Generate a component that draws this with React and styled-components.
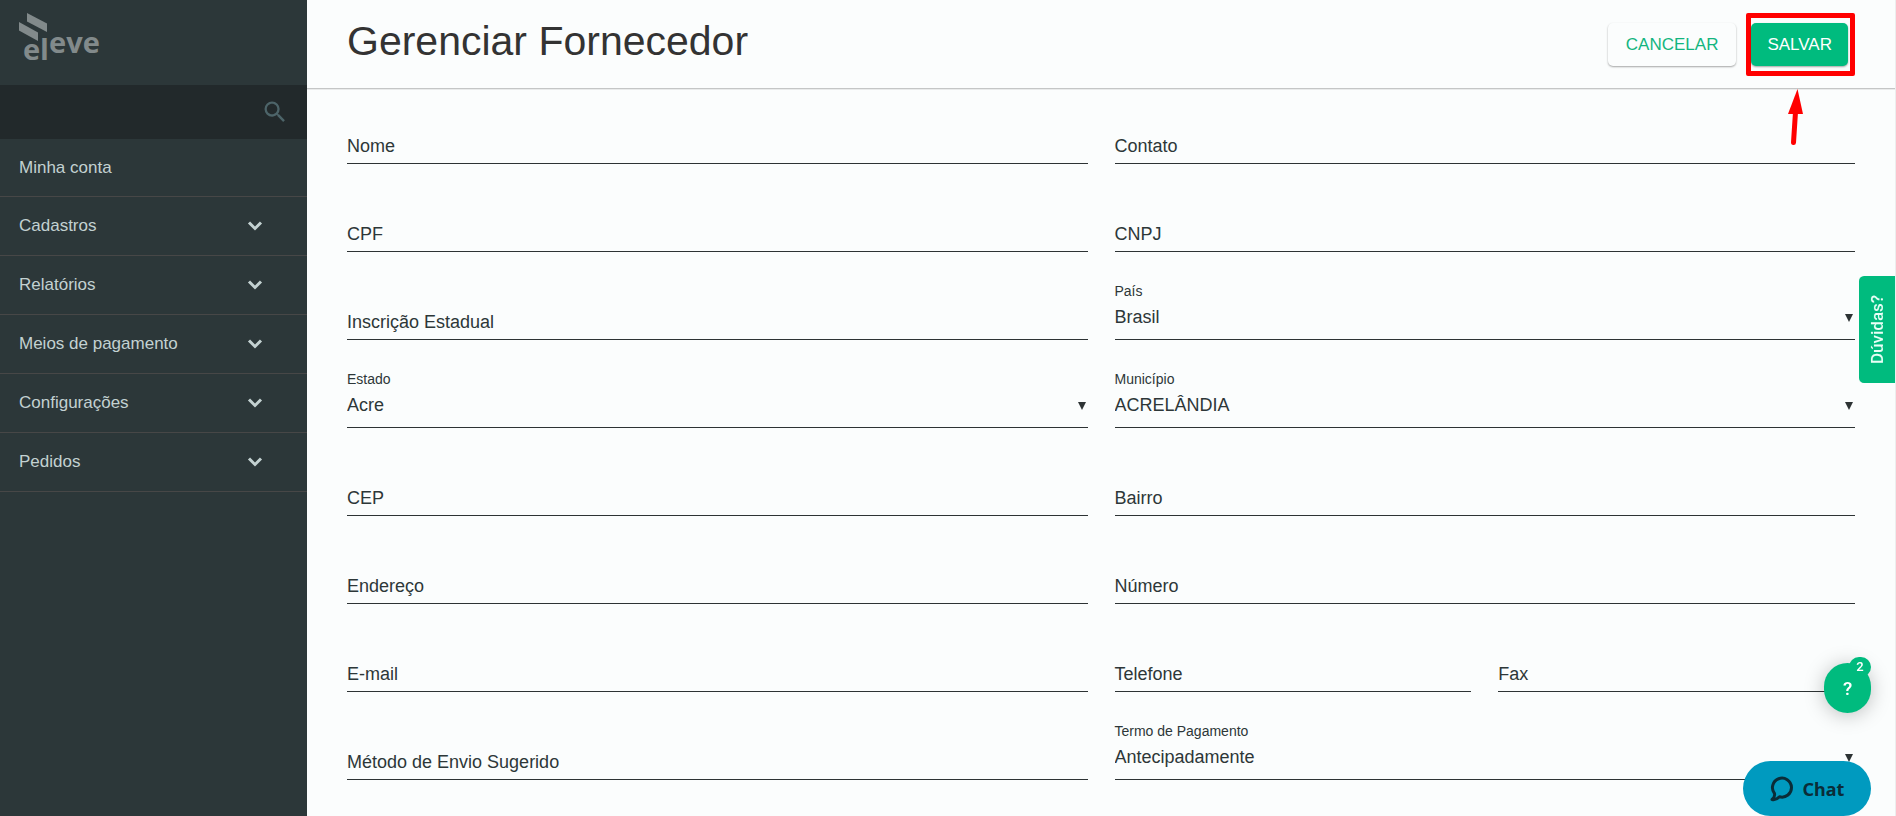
import { useId } from 'react';
import styled, { createGlobalStyle, css } from 'styled-components';
import { MdSearch } from 'react-icons/md';

const GlobalStyle = createGlobalStyle`
  * {
    box-sizing: border-box;
  }
  body {
    margin: 0;
    background: #fbfdfd;
    color: #2d3738;
    font-family: 'Liberation Sans', Arial, sans-serif;
    font-size: 18px;
  }
  button, input, select {
    font: inherit;
    color: inherit;
  }
`;

const Page = styled.div`
  display: flex;
  min-height: 100vh;
`;
const Sidebar = styled.aside`
  flex: 0 0 307px;
  background: #2c3739;
  color: #c3d1d1;
`;
const LogoLink = styled.a`
  display: flex;
  height: 85px;
  padding: 13px 19px;
  svg {
    display: block;
  }
  text {
    font-family: 'Open Sans', sans-serif;
    font-size: 29px;
    font-weight: 700;
  }
`;
const SearchBar = styled.form`
  display: flex;
  align-items: center;
  height: 54px;
  padding: 0 18px;
  background: #22292b;
`;
const SearchInput = styled.input`
  flex: 1;
  min-width: 0;
  border: none;
  outline: none;
  background: transparent;
`;
const SearchButton = styled.button`
  display: flex;
  padding: 0;
  border: none;
  background: none;
  color: #4d6469;
  font-size: 28px;
  cursor: pointer;
`;
const Menu = styled.ul`
  margin: 0;
  padding: 0;
  list-style: none;
`;
const menuEntry = css`
  display: flex;
  align-items: center;
  justify-content: space-between;
  width: 100%;
  padding: 19px 44px 19px 19px;
  border: none;
  border-bottom: 1px solid #474747;
  background: none;
  color: inherit;
  font-size: 17px;
  line-height: 20px;
  text-decoration: none;
  text-align: left;
  cursor: pointer;
`;
const MenuLink = styled.a`
  ${menuEntry}
  padding-bottom: 18px;
`;
const MenuButton = styled.button`
  ${menuEntry}
`;

const Main = styled.main`
  flex: 1;
  min-width: 0;
  border-right: 1px solid #eceeee;
`;
const Header = styled.header`
  display: flex;
  align-items: flex-start;
  justify-content: space-between;
  height: 88px;
  padding: 13px 40px 0;
  box-shadow: 0 1px 0 #c4c6c6, 0 2px 0 #e9ebeb;
`;
const Title = styled.h1`
  margin: 0;
  color: #333;
  font-size: 41px;
  font-weight: 400;
  line-height: 56px;
`;
const Actions = styled.div`
  display: flex;
  align-items: center;
  gap: 10px;
`;
const Button = styled.button`
  height: 43px;
  padding: 0 ${({ $primary }) => ($primary ? '16px' : '18px')};
  border: none;
  border-radius: 5px;
  background: ${({ $primary }) => ($primary ? '#00bb7e' : '#fbfdfd')};
  box-shadow: 0 1px 2px rgba(0, 0, 0, 0.35);
  color: ${({ $primary }) => ($primary ? '#fff' : '#13b57f')};
  font-size: 17px;
  text-transform: uppercase;
  cursor: pointer;
`;
const Highlight = styled.div`
  position: relative;
  padding: 5px 2px 5px 0;
  border: 5px solid #ff0000;
  border-radius: 2px;
`;
const Arrow = styled.svg`
  position: absolute;
  top: 70px;
  left: 36px;
`;

const Form = styled.form`
  display: grid;
  grid-template-columns: 1fr 1fr;
  gap: 26px 27px;
  padding: 14px 40px 26px;
`;
const Pair = styled.div`
  display: grid;
  grid-template-columns: 1fr 1fr;
  gap: 27px;
`;
/* label and input share one cell, so the label rests on the line */
const InputField = styled.div`
  display: grid;
  min-width: 0;
  height: 62px;
  border-bottom: 1px solid #2d3334;
  label,
  input {
    grid-area: 1 / 1;
  }
  label {
    align-self: end;
    padding-bottom: 6px;
    line-height: 22px;
  }
`;
const Input = styled.input`
  width: 100%;
  min-width: 0;
  padding: 28px 0 0;
  border: none;
  outline: none;
  background: transparent;
`;
const SelectField = styled.div`
  position: relative;
  display: flex;
  flex-direction: column;
  min-width: 0;
  height: 62px;
  border-bottom: 1px solid #2d3334;
  label {
    padding-top: 5px;
    font-size: 14px;
    line-height: 16px;
  }
  svg {
    position: absolute;
    right: 2px;
    bottom: 17px;
    pointer-events: none;
  }
`;
const Select = styled.select`
  flex: 1;
  padding: 0 20px 5px 0;
  border: none;
  outline: none;
  appearance: none;
  background: transparent;
`;

const Doubts = styled.button`
  position: fixed;
  top: 276px;
  right: 1px;
  width: 36px;
  height: 107px;
  padding: 0;
  border: none;
  border-radius: 0 5px 5px 0;
  background: #00bb7e;
  color: #e9fff7;
  font-family: Roboto, sans-serif;
  font-size: 17px;
  font-weight: 500;
  writing-mode: vertical-rl;
  transform: rotate(180deg);
  cursor: pointer;
`;
const Help = styled.button`
  position: fixed;
  right: 25px;
  bottom: 103px;
  width: 47px;
  height: 50px;
  padding: 0;
  border: none;
  border-radius: 25px;
  background: #00bb7e;
  box-shadow: 0 2px 20px rgba(0, 0, 0, 0.25);
  color: #fff;
  font-family: Roboto, sans-serif;
  font-size: 19px;
  font-weight: 500;
  cursor: pointer;
`;
const Badge = styled.span`
  position: absolute;
  top: -6px;
  right: 0;
  width: 22px;
  border-radius: 11px;
  background: #00bb7e;
  font-size: 13px;
  line-height: 20px;
`;
const Chat = styled.button`
  position: fixed;
  right: 25px;
  bottom: 0;
  display: flex;
  align-items: center;
  justify-content: center;
  gap: 9px;
  width: 128px;
  height: 55px;
  padding: 0;
  border: none;
  border-radius: 28px;
  background: #009abf;
  color: #0a2d38;
  font-family: 'Noto Sans', sans-serif;
  font-size: 18px;
  font-weight: 700;
  cursor: pointer;
`;

const Logo = () => (
  <svg width="82" height="56" viewBox="0 0 82 56" fill="#828a8b">
    <path d="M8 0 28 10.500V19L8 8.500Z" />
    <path d="M0 9 19 19.500V28L0 17.500Z" />
    <text x="4" y="47">e</text>
    <text x="21" y="47">l</text>
    <text x="30" y="40">eve</text>
  </svg>
);

const Chevron = () => (
  <svg width="16" height="10" viewBox="0 0 16 10" fill="none">
    <path d="M2 1.500 8 7.500 14 1.500" stroke="#c3d1d1" strokeWidth="3" />
  </svg>
);

const TextField = ({ label }) => {
  const id = useId();
  return (
    <InputField>
      <label htmlFor={id}>{label}</label>
      <Input id={id} type="text" />
    </InputField>
  );
};

const DropDown = ({ label, value }) => {
  const id = useId();
  return (
    <SelectField>
      <label htmlFor={id}>{label}</label>
      <Select id={id} defaultValue={value}>
        <option>{value}</option>
      </Select>
      <svg width="8" height="8" viewBox="0 0 8 8">
        <path d="M0 0H8L4 8Z" fill="#2d3334" />
      </svg>
    </SelectField>
  );
};

const sections = [
  'Cadastros',
  'Relatórios',
  'Meios de pagamento',
  'Configurações',
  'Pedidos',
];

const App = () => {
  return (
    <>
      <GlobalStyle />
      <Page>
        <Sidebar>
          <LogoLink href="#">
            <Logo />
          </LogoLink>
          <SearchBar onSubmit={e => e.preventDefault()}>
            <SearchInput type="search" aria-label="Buscar" />
            <SearchButton type="submit" aria-label="Buscar">
              <MdSearch />
            </SearchButton>
          </SearchBar>
          <Menu>
            <li>
              <MenuLink href="#">Minha conta</MenuLink>
            </li>
            {sections.map(name => (
              <li key={name}>
                <MenuButton type="button">
                  {name}
                  <Chevron />
                </MenuButton>
              </li>
            ))}
          </Menu>
        </Sidebar>
        <Main>
          <Header>
            <Title>Gerenciar Fornecedor</Title>
            <Actions>
              <Button type="button">Cancelar</Button>
              <Highlight>
                <Button type="submit" form="fornecedor" $primary>
                  Salvar
                </Button>
                <Arrow width="18" height="60" viewBox="0 0 18 60">
                  <path d="M10.500 1 16 26H1Z" fill="#f00" />
                  <path
                    d="M8.500 24 6.500 54.500"
                    stroke="#f00"
                    strokeWidth="5"
                    strokeLinecap="round"
                  />
                </Arrow>
              </Highlight>
            </Actions>
          </Header>
          <Form id="fornecedor" onSubmit={e => e.preventDefault()}>
            <TextField label="Nome" />
            <TextField label="Contato" />
            <TextField label="CPF" />
            <TextField label="CNPJ" />
            <TextField label="Inscrição Estadual" />
            <DropDown label="País" value="Brasil" />
            <DropDown label="Estado" value="Acre" />
            <DropDown label="Município" value="ACRELÂNDIA" />
            <TextField label="CEP" />
            <TextField label="Bairro" />
            <TextField label="Endereço" />
            <TextField label="Número" />
            <TextField label="E-mail" />
            <Pair>
              <TextField label="Telefone" />
              <TextField label="Fax" />
            </Pair>
            <TextField label="Método de Envio Sugerido" />
            <DropDown label="Termo de Pagamento" value="Antecipadamente" />
          </Form>
        </Main>
      </Page>
      <Doubts type="button">Dúvidas?</Doubts>
      <Help type="button">
        ?<Badge>2</Badge>
      </Help>
      <Chat type="button">
        <svg width="24" height="26" viewBox="0 0 24 26" fill="none">
          <path
            d="M4.500 17.500A9.500 9.500 0 1 1 9.500 20.800C7 23.500 4.500 24 2 23.500C4 22 5 20 4.500 17.500Z"
            stroke="#0a2d38"
            strokeWidth="3"
            strokeLinejoin="round"
          />
        </svg>
        Chat
      </Chat>
    </>
  );
};
export default App;
